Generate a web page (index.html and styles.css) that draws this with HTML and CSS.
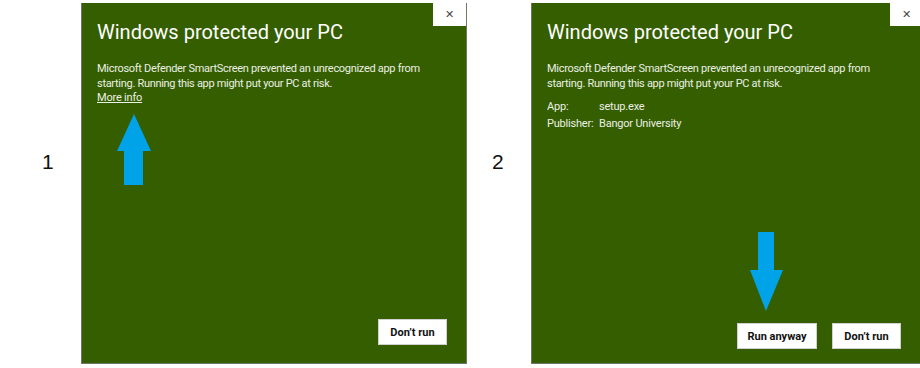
FILE: index.html
```html
<!DOCTYPE html>
<html>
<head>
    <title>SmartScreen steps</title>
    <link rel="stylesheet" href="styles.css">
</head>
<body>
    <div class="steps">
        <div class="step-label step-label-1">1</div>

        <div class="dialog dialog-1">
            <button class="close">&#x2715;</button>
            <h1>Windows protected your PC</h1>
            <p class="message">Microsoft Defender SmartScreen prevented an unrecognized app from starting. Running this app might put your PC at risk.</p>
            <a class="more-info" href="#">More info</a>

            <svg class="arrow arrow-up" width="34" height="72" viewBox="0 0 34 72">
                <polygon points="17,0 34,37 26,37 26,71 7,71 7,37 0,37" fill="#00a3e8"/>
            </svg>

            <div class="actions">
                <button class="action">Don’t run</button>
            </div>
        </div>

        <div class="step-label step-label-2">2</div>

        <div class="dialog dialog-2">
            <button class="close">&#x2715;</button>
            <h1>Windows protected your PC</h1>
            <p class="message">Microsoft Defender SmartScreen prevented an unrecognized app from starting. Running this app might put your PC at risk.</p>
            <div class="details">
                <span>App:</span><span>setup.exe</span>
                <span>Publisher:</span><span>Bangor University</span>
            </div>

            <svg class="arrow arrow-down" width="34" height="80" viewBox="0 0 34 80">
                <polygon points="8,0 24,0 24,38 33,38 16,79 0,38 8,38" fill="#00a3e8"/>
            </svg>

            <div class="actions">
                <button class="action action-run">Run anyway</button>
                <button class="action">Don’t run</button>
            </div>
        </div>
    </div>
</body>
</html>
```

FILE: styles.css
```css
body {
    margin: 0;
    background: white;
    font-family: Roboto, "Open Sans", sans-serif;
    overflow: hidden;
}
.steps {
    display: flex;
    padding-top: 3px;
    width: 924px;
}
.step-label {
    font-family: "Liberation Sans", sans-serif;
    font-size: 21px;
    color: #111;
    padding-top: 147px;
}
.step-label-1 {
    width: 81px;
    padding-left: 42px;
    box-sizing: border-box;
}
.step-label-2 {
    width: 64px;
    padding-left: 25px;
    box-sizing: border-box;
}
.dialog {
    position: relative;
    display: flex;
    flex-direction: column;
    height: 361px;
    box-sizing: border-box;
    background: #355e01;
    color: #eaf0e2;
    border: 1px solid #6f7768;
    border-top: none;
    padding: 15px 19px 18px 15px;
}
.dialog-1 {
    width: 386px;
}
.dialog-2 {
    flex: 1;
    padding-bottom: 14px;
    padding-right: 22px;
}
.close {
    position: absolute;
    top: 0;
    right: 0;
    width: 33px;
    height: 23px;
    border: none;
    background: white;
    color: #444;
    font-size: 11px;
    padding: 0;
}
.dialog-2 .close {
    top: -3px;
    height: 26px;
    padding-top: 3px;
}
h1 {
    margin: 0;
    font-weight: 400;
    font-size: 20px;
    line-height: 28px;
    color: white;
}
.message {
    margin: 16px 0 0;
    font-size: 11px;
    line-height: 14.5px;
    letter-spacing: -0.3px;
}
.more-info {
    font-size: 11px;
    line-height: 14.5px;
    letter-spacing: -0.2px;
    color: #eaf0e2;
    align-self: flex-start;
}
.details {
    display: grid;
    grid-template-columns: 52px auto;
    justify-content: start;
    margin-top: 7px;
    font-size: 11px;
    line-height: 17px;
    letter-spacing: -0.2px;
    white-space: nowrap;
}
.arrow {
    position: absolute;
}
.arrow-up {
    left: 35px;
    top: 111px;
}
.arrow-down {
    left: 218px;
    top: 229px;
}
.actions {
    margin-top: auto;
    display: flex;
    justify-content: flex-end;
    gap: 15px;
}
.action {
    width: 69px;
    height: 26px;
    padding: 0;
    border: 1px solid #d0d0d0;
    background: white;
    color: #111;
    font-family: Roboto, "Open Sans", sans-serif;
    font-weight: 700;
    font-size: 11px;
}
.action-run {
    width: 80px;
}
```
